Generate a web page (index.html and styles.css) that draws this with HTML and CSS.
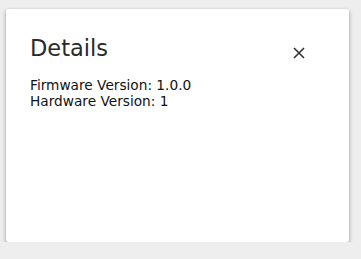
FILE: index.html
```html
<!DOCTYPE html>
<html lang="en">
<head>
    <meta charset="UTF-8">
    <title>Details</title>
    <link rel="stylesheet" href="styles.css">
</head>
<body>
<div class="dialog">
    <div class="dialog-header">
        <h2 class="dialog-title">Details</h2>
        <button class="close-button" title="Close">
            <svg width="12" height="12" viewBox="0 0 12 12">
                <path d="M1 1 L11 11 M11 1 L1 11" stroke="#333" stroke-width="1.6" fill="none"/>
            </svg>
        </button>
    </div>
    <div class="dialog-body">
        <div>Firmware Version: 1.0.0</div>
        <div>Hardware Version: 1</div>
    </div>
</div>
</body>
</html>
```

FILE: styles.css
```css
body {
    margin: 0;
    background-color: #eeeeee;
    font-family: "DejaVu Sans", sans-serif;
    color: #222;
}
.dialog {
    margin-top: 9px;
    margin-left: 6px;
    width: 343px;
    height: 233px;
    box-sizing: border-box;
    background-color: #fff;
    border-radius: 2px;
    box-shadow: 0 2px 4px rgba(0,0,0,0.35), 0 0 2px rgba(0,0,0,0.08);
    padding: 24px 24px 0 24px;
}
.dialog-header {
    display: flex;
    justify-content: space-between;
    align-items: center;
}
.dialog-title {
    margin: 0;
    font-size: 22.5px;
    font-weight: normal;
    line-height: 30px;
    color: #2a2a2a;
}
.close-button {
    background: none;
    border: none;
    padding: 0;
    margin-right: 20px;
    margin-top: 10px;
    width: 12px;
    height: 12px;
    cursor: pointer;
}
.close-button svg { display: block; }
.dialog-body {
    margin-top: 14px;
    font-size: 13.7px;
    line-height: 16px;
    color: #111;
}
```
